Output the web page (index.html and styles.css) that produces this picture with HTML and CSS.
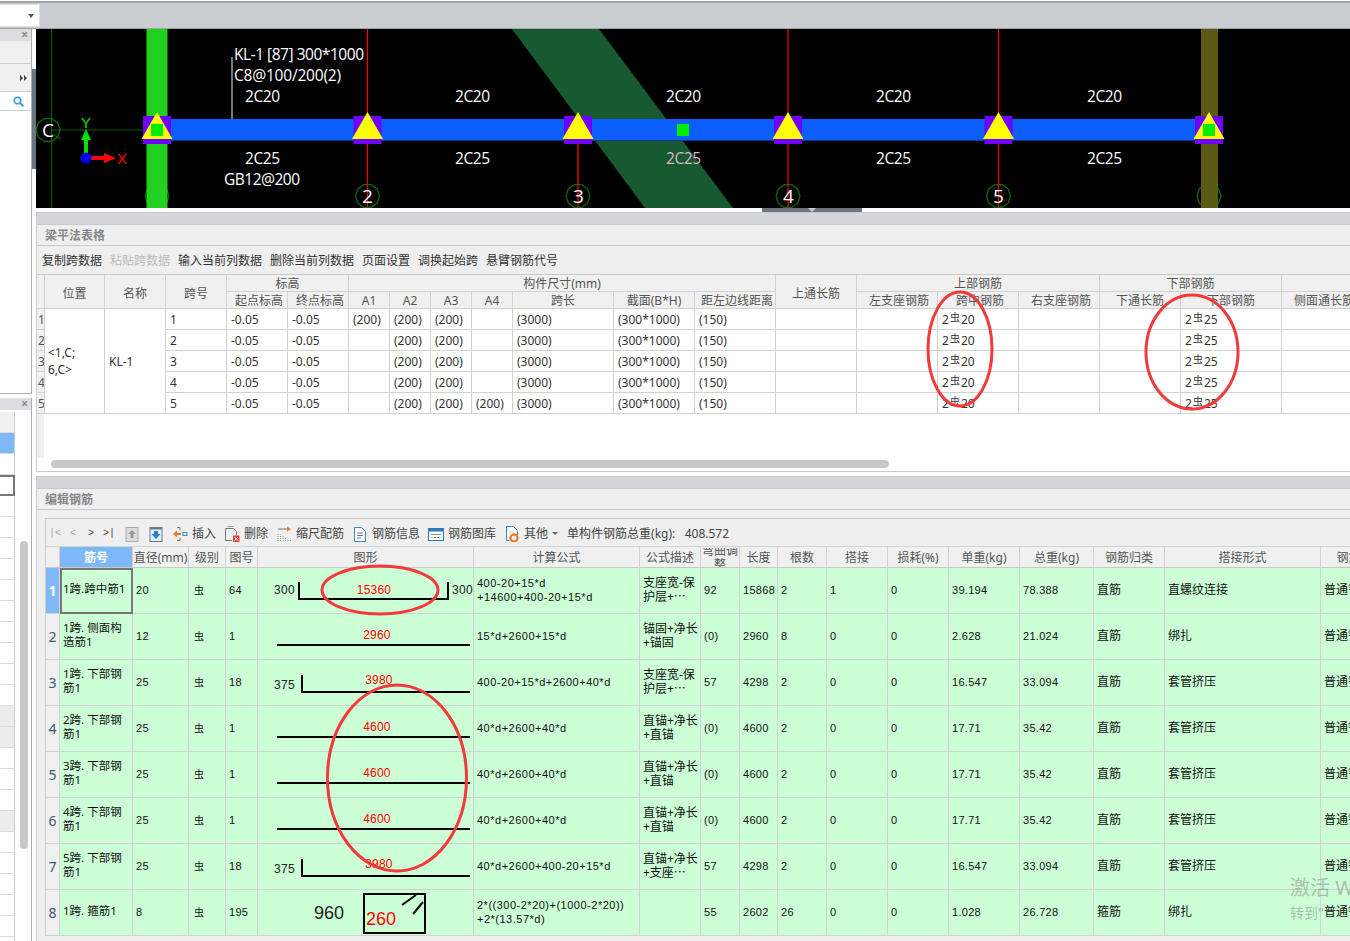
FILE: index.html
```html
<!DOCTYPE html>
<html lang="zh">
<head>
<meta charset="utf-8">
<title>梁平法表格</title>
<link rel="stylesheet" href="styles.css">
</head>
<body>
<header class="topbar">
  <div class="combo"><span class="combo-caret"></span></div>
</header>
<div class="main">
  <aside class="sidebar">
    <section class="pane pane-top">
      <div class="pane-head">×</div>
      <div class="side-row side-a"></div>
      <div class="side-row side-b">
        <svg class="side-more" width="8" height="6" viewBox="0 0 8 6"><path d="M0 0l3 3-3 3zM4 0l3 3-3 3z" fill="#444"/></svg>
      </div>
      <div class="side-row side-c">
        <svg width="11" height="11" viewBox="0 0 11 11"><circle cx="4.5" cy="4.5" r="3.3" fill="none" stroke="#3c9bd8" stroke-width="1.6"/><path d="M7 7l3.3 3.3" stroke="#3c9bd8" stroke-width="2"/></svg>
      </div>
    </section>
    <section class="pane pane-bottom">
      <div class="pane-head">×</div>
      <div class="list">
        <div class="li li-head"></div><div class="li li-blue"></div><div class="li"></div><div class="li li-sel"></div>
        <div class="li"></div><div class="li"></div><div class="li"></div><div class="li"></div>
        <div class="li"></div><div class="li"></div><div class="li"></div><div class="li"></div>
        <div class="li"></div><div class="li"></div><div class="li li-grey"></div><div class="li li-grey"></div>
        <div class="li"></div><div class="li"></div><div class="li"></div><div class="li li-grey"></div>
        <div class="li"></div><div class="li"></div><div class="li"></div><div class="li"></div>
        <div class="li"></div><div class="li"></div>
      </div>
      <div class="side-scroll"></div>
    </section>
  </aside>
  <div class="gutter"><span class="gutter-handle"></span></div>
  <div class="content">
    <div class="canvas">
      <svg class="drawing" width="1314" height="179" viewBox="36 29 1314 179">
        <defs>
          <polygon id="ring" points="12,0 9.7,7.05 3.7,11.4 -3.7,11.4 -9.7,7.05 -12,0 -9.7,-7.05 -3.7,-11.4 3.7,-11.4 9.7,-7.05" fill="none" stroke="#0a6e0a" stroke-width="1.2"/>
          <g id="support">
            <rect x="-14" y="-14" width="28" height="28" fill="#7000ff"/>
            <polygon points="0,-18 -15.5,9 15.5,9" fill="#ffff00"/>
          </g>
        </defs>
        <rect x="36" y="29" width="1314" height="179" fill="#000"/>
        <path d="M51.5 29V208M52 130H143M52 134L61 139" stroke="#0b5c0b" stroke-width="1.2" fill="none"/>
        <use href="#ring" x="48" y="130"/>
        <use href="#ring" x="157" y="196"/>
        <use href="#ring" x="1209" y="196"/>
        <polygon points="512,29 599,29 733,208 645,208" fill="#175a30"/>
        <rect x="146.500" y="29" width="21" height="179" fill="#22d020"/>
        <rect x="1201" y="29" width="17" height="179" fill="#5a5a14"/>
        <path d="M367.500 29V208M788 29V208M998.500 29V208" stroke="#f00" stroke-width="1.2"/>
        <path d="M578 144V208" stroke="#d80000" stroke-width="1.6"/>
        <use href="#ring" x="367.500" y="196"/>
        <use href="#ring" x="578" y="196"/>
        <use href="#ring" x="788" y="196"/>
        <use href="#ring" x="998.500" y="196"/>
        <rect x="167" y="119" width="1034" height="21" fill="#0d5eff"/>
        <rect x="167" y="140" width="1034" height="1" fill="#0a3a90"/>
        <path d="M232 57V119" stroke="#c8c8c8" stroke-width="1.2"/>
        <use href="#support" x="157" y="130"/>
        <use href="#support" x="367.500" y="130"/>
        <use href="#support" x="578" y="130"/>
        <use href="#support" x="788" y="130"/>
        <use href="#support" x="998.500" y="130"/>
        <use href="#support" x="1209" y="130"/>
        <rect x="151" y="124" width="12" height="12" fill="#00ee00"/>
        <rect x="677" y="124" width="12" height="12" fill="#00ee00"/>
        <rect x="1203" y="124" width="12" height="12" fill="#00ee00"/>
        <path d="M86 156V138" stroke="#00e000" stroke-width="4"/>
        <polygon points="86,129 81,140 91,140" fill="#00e000"/>
        <path d="M90 158H106" stroke="#f00" stroke-width="4"/>
        <polygon points="116,158 104,153 104,163" fill="#f00"/>
        <circle cx="86" cy="158" r="5.500" fill="#0000ee"/>
        <text class="axis-y" x="81" y="128" textLength="10">Y</text>
        <text class="axis-x" x="117" y="164" textLength="10">X</text>
        <text class="cad" x="234" y="60" textLength="130">KL-1 [87] 300*1000</text>
        <text class="cad" x="234" y="81" textLength="107">C8@100/200(2)</text>
        <text class="cad" x="245" y="102" textLength="35">2C20</text>
        <text class="cad" x="455" y="102" textLength="35">2C20</text>
        <text class="cad" x="666" y="102" textLength="35">2C20</text>
        <text class="cad" x="876" y="102" textLength="35">2C20</text>
        <text class="cad" x="1087" y="102" textLength="35">2C20</text>
        <text class="cad" x="245" y="164" textLength="35">2C25</text>
        <text class="cad" x="455" y="164" textLength="35">2C25</text>
        <text class="cad cad-tint" x="666" y="164" textLength="35">2C25</text>
        <text class="cad" x="876" y="164" textLength="35">2C25</text>
        <text class="cad" x="1087" y="164" textLength="35">2C25</text>
        <text class="cad" x="224" y="185" textLength="76">GB12@200</text>
        <text class="cad cad-big" x="42" y="137">C</text>
        <text class="cad cad-big" x="362" y="203">2</text>
        <text class="cad cad-big" x="573" y="203">3</text>
        <text class="cad cad-big" x="783" y="203">4</text>
        <text class="cad cad-big" x="993" y="203">5</text>
      </svg>
    </div>
    <div class="splitter"><span class="split-handle"></span></div>

    <section class="block block-table">
      <div class="block-bar"></div>
      <div class="block-title">梁平法表格</div>
      <div class="tools">
        <span>复制跨数据</span><span class="off">粘贴跨数据</span><span>输入当前列数据</span><span>删除当前列数据</span><span>页面设置</span><span>调换起始跨</span><span>悬臂钢筋代号</span>
      </div>
      <div class="sheet-wrap">
        <table class="sheet">
          <colgroup>
            <col class="w8"><col class="w60"><col class="w61"><col class="w61"><col class="w61"><col class="w61">
            <col class="w41"><col class="w41"><col class="w41"><col class="w41"><col class="w101"><col class="w81"><col class="w81">
            <col class="w81"><col class="w81"><col class="w81"><col class="w81"><col class="w81"><col class="w101"><col class="w85">
          </colgroup>
          <thead>
            <tr>
              <th rowspan="2"></th><th rowspan="2" class="rs">位置</th><th rowspan="2" class="rs">名称</th><th rowspan="2" class="rs">跨号</th>
              <th colspan="2">标高</th><th colspan="7">构件尺寸(mm)</th><th rowspan="2" class="rs">上通长筋</th>
              <th colspan="3">上部钢筋</th><th colspan="2">下部钢筋</th><th></th>
            </tr>
            <tr>
              <th class="o">起点标高</th><th class="o">终点标高</th><th>A1</th><th>A2</th><th>A3</th><th>A4</th><th>跨长</th><th>截面(B*H)</th><th class="o">距左边线距离</th>
              <th class="o">左支座钢筋</th><th class="o">跨中钢筋</th><th class="o">右支座钢筋</th><th>下通长筋</th><th>下部钢筋</th><th>侧面通长筋</th>
            </tr>
          </thead>
          <tbody>
            <tr>
              <td class="rn">1</td><td rowspan="5" class="pos">&lt;1,C;<br>6,C&gt;</td><td rowspan="5">KL-1</td>
              <td>1</td><td>-0.05</td><td>-0.05</td><td>(200)</td><td>(200)</td><td>(200)</td><td></td><td>(3000)</td><td>(300*1000)</td><td>(150)</td><td></td><td></td><td>2<span class="bar">虫</span>20</td><td></td><td></td><td>2<span class="bar">虫</span>25</td><td></td>
            </tr>
            <tr>
              <td class="rn">2</td>
              <td>2</td><td>-0.05</td><td>-0.05</td><td></td><td>(200)</td><td>(200)</td><td></td><td>(3000)</td><td>(300*1000)</td><td>(150)</td><td></td><td></td><td>2<span class="bar">虫</span>20</td><td></td><td></td><td>2<span class="bar">虫</span>25</td><td></td>
            </tr>
            <tr>
              <td class="rn">3</td>
              <td>3</td><td>-0.05</td><td>-0.05</td><td></td><td>(200)</td><td>(200)</td><td></td><td>(3000)</td><td>(300*1000)</td><td>(150)</td><td></td><td></td><td>2<span class="bar">虫</span>20</td><td></td><td></td><td>2<span class="bar">虫</span>25</td><td></td>
            </tr>
            <tr>
              <td class="rn">4</td>
              <td>4</td><td>-0.05</td><td>-0.05</td><td></td><td>(200)</td><td>(200)</td><td></td><td>(3000)</td><td>(300*1000)</td><td>(150)</td><td></td><td></td><td>2<span class="bar">虫</span>20</td><td></td><td></td><td>2<span class="bar">虫</span>25</td><td></td>
            </tr>
            <tr>
              <td class="rn">5</td>
              <td>5</td><td>-0.05</td><td>-0.05</td><td></td><td>(200)</td><td>(200)</td><td>(200)</td><td>(3000)</td><td>(300*1000)</td><td>(150)</td><td></td><td></td><td>2<span class="bar">虫</span>20</td><td></td><td></td><td>2<span class="bar">虫</span>25</td><td></td>
            </tr>
          </tbody>
        </table>
        <div class="sheet-strip"></div>
        <div class="sheet-scroll"></div>
      </div>
    </section>

    <section class="block block-rebar">
      <div class="block-bar"></div>
      <div class="block-title">编辑钢筋</div>
      <div class="rebar-body">
        <div class="panel">
          <div class="rtools">
            <div class="nav"><span class="dim">|&lt;</span><span class="dim">&lt;</span><span>&gt;</span><span>&gt;|</span></div>
            <svg class="ic" viewBox="0 0 16 16"><rect x="2" y="1.500" width="12" height="14" fill="#ddd" stroke="#aaa"/><path d="M8 4l4 4H9.500v4h-3V8H4z" fill="#999"/></svg>
            <svg class="ic" viewBox="0 0 16 16"><rect x="2" y="1.500" width="12" height="14" fill="#e4eefa" stroke="#6b7a8a"/><rect x="2" y="1.500" width="12" height="2" fill="#6b7a8a"/><path d="M8 13l4.500-5H10V5H6v3H3.500z" fill="#2a7fd4"/></svg>
            <span class="ti"><svg class="ic" viewBox="0 0 16 16"><path d="M1 8l4-3.500V7h4v2H5v2.500z" fill="#ee7a1a"/><path d="M5 1.500h3M5 14.500h3M8 1.500v3M8 11.500v3" stroke="#777" fill="none"/><rect x="11" y="6.500" width="4" height="3" fill="none" stroke="#3a87c8"/></svg>插入</span>
            <span class="ti"><svg class="ic" viewBox="0 0 16 16"><path d="M1.500 2.500h8l3 3V9M1.500 2.500V14.500H8" fill="none" stroke="#777"/><path d="M3.500 .5h6" stroke="#999"/><rect x="9" y="9.500" width="6.500" height="6.500" fill="#e0423c"/><path d="M10.500 11l3.500 3.500M14 11l-3.500 3.500" stroke="#fff"/></svg>删除</span>
            <span class="ti"><svg class="ic" viewBox="0 0 16 16"><path d="M2 15V7M4.500 15V8.500M7 15V10M9.500 15v-3.500M12 15v-2M14.500 15v-1" stroke="#8a8f96" stroke-dasharray="1 1" fill="none"/><path d="M2 3h10" stroke="#777"/><path d="M15 3l-4-2.500v5z" fill="#ee7a1a"/></svg>缩尺配筋</span>
            <span class="ti"><svg class="ic" viewBox="0 0 16 16"><path d="M2.500 1.500h7l4 4v10h-11z" fill="#fff" stroke="#3a87c8"/><path d="M5 7h6M5 9.500h6M5 12h4" stroke="#777"/></svg>钢筋信息</span>
            <span class="ti"><svg class="ic" viewBox="0 0 16 16"><rect x=".5" y="2.500" width="15" height="12" fill="#fff" stroke="#2e78bd"/><rect x=".5" y="2.500" width="15" height="3" fill="#2e78bd"/><path d="M3 8.500h10" stroke="#888"/><path d="M3 11.500h2" stroke="#d9a030"/><path d="M6 11.500h2" stroke="#d84a3a"/><path d="M9 11.500h2" stroke="#3aa060"/></svg>钢筋图库</span>
            <span class="ti"><svg class="ic" viewBox="0 0 16 16"><path d="M2.500 .5h7l4 4V9M2.500 .5V14.500h3" fill="#fff" stroke="#3a87c8"/><circle cx="10" cy="12" r="3.500" fill="none" stroke="#ee7a1a" stroke-width="2"/><path d="M10 7.500v2M10 14.500v2M5.500 12h2M12.500 12h2" stroke="#ee7a1a" stroke-width="1.500"/></svg>其他</span>
            <span class="caret"></span>
            <span class="total">单构件钢筋总重(kg):&nbsp;&nbsp; 408.572</span>
          </div>
          <table class="grid">
            <colgroup>
              <col class="w14"><col class="w73"><col class="w56"><col class="w37"><col class="w32"><col class="w216"><col class="w166"><col class="w61"><col class="w39"><col class="w38"><col class="w49"><col class="w61"><col class="w61"><col class="w71"><col class="w74"><col class="w71"><col class="w156"><col class="w80">
            </colgroup>
            <thead>
              <tr>
                <th></th><th class="cur">筋号</th><th>直径(mm)</th><th>级别</th><th>图号</th><th>图形</th><th>计算公式</th><th>公式描述</th><th><div class="clip">弯曲调整</div></th><th>长度</th><th>根数</th><th>搭接</th><th>损耗(%)</th><th>单重(kg)</th><th>总重(kg)</th><th>钢筋归类</th><th>搭接形式</th><th>钢筋类型</th>
              </tr>
            </thead>
            <tbody>
              <tr>
                <th class="cur">1</th><td class="active name">1跨.跨中筋1</td><td class="n">20</td><td class="lv">虫</td><td class="n">64</td>
                <td class="shape"><svg class="sh" viewBox="257 0 215 45"><text class="dim-t" x="273" y="26">300</text><path d="M298 14V31H447V14" class="rb"/><text class="red-t" x="373" y="26">15360</text><text class="dim-t" x="451" y="26">300</text></svg></td>
                <td class="n f">400-20+15*d<br>+14600+400-20+15*d</td><td class="d">支座宽-保<br>护层+⋯</td><td class="n">92</td><td class="n">15868</td><td class="n">2</td><td class="n">1</td><td class="n">0</td><td class="n">39.194</td><td class="n">78.388</td><td>直筋</td><td>直螺纹连接</td><td>普通钢筋</td>
              </tr>
              <tr>
                <th>2</th><td class="name">1跨. 侧面构<br>造筋1</td><td class="n">12</td><td class="lv">虫</td><td class="n">1</td>
                <td class="shape"><svg class="sh" viewBox="257 0 215 45"><text class="red-t" x="376" y="25">2960</text><path d="M276 31H469" class="rb"/></svg></td>
                <td class="n f">15*d+2600+15*d</td><td class="d">锚固+净长<br>+锚固</td><td class="n">(0)</td><td class="n">2960</td><td class="n">8</td><td class="n">0</td><td class="n">0</td><td class="n">2.628</td><td class="n">21.024</td><td>直筋</td><td>绑扎</td><td>普通钢筋</td>
              </tr>
              <tr>
                <th>3</th><td class="name">1跨. 下部钢<br>筋1</td><td class="n">25</td><td class="lv">虫</td><td class="n">18</td>
                <td class="shape"><svg class="sh" viewBox="257 0 215 45"><text class="dim-t" x="273" y="29">375</text><path d="M301 15V32H469" class="rb"/><text class="red-t" x="378" y="24">3980</text></svg></td>
                <td class="n f">400-20+15*d+2600+40*d</td><td class="d">支座宽-保<br>护层+⋯</td><td class="n">57</td><td class="n">4298</td><td class="n">2</td><td class="n">0</td><td class="n">0</td><td class="n">16.547</td><td class="n">33.094</td><td>直筋</td><td>套管挤压</td><td>普通钢筋</td>
              </tr>
              <tr>
                <th>4</th><td class="name">2跨. 下部钢<br>筋1</td><td class="n">25</td><td class="lv">虫</td><td class="n">1</td>
                <td class="shape"><svg class="sh" viewBox="257 0 215 45"><text class="red-t" x="376" y="25">4600</text><path d="M276 31H469" class="rb"/></svg></td>
                <td class="n f">40*d+2600+40*d</td><td class="d">直锚+净长<br>+直锚</td><td class="n">(0)</td><td class="n">4600</td><td class="n">2</td><td class="n">0</td><td class="n">0</td><td class="n">17.71</td><td class="n">35.42</td><td>直筋</td><td>套管挤压</td><td>普通钢筋</td>
              </tr>
              <tr>
                <th>5</th><td class="name">3跨. 下部钢<br>筋1</td><td class="n">25</td><td class="lv">虫</td><td class="n">1</td>
                <td class="shape"><svg class="sh" viewBox="257 0 215 45"><text class="red-t" x="376" y="25">4600</text><path d="M276 31H469" class="rb"/></svg></td>
                <td class="n f">40*d+2600+40*d</td><td class="d">直锚+净长<br>+直锚</td><td class="n">(0)</td><td class="n">4600</td><td class="n">2</td><td class="n">0</td><td class="n">0</td><td class="n">17.71</td><td class="n">35.42</td><td>直筋</td><td>套管挤压</td><td>普通钢筋</td>
              </tr>
              <tr>
                <th>6</th><td class="name">4跨. 下部钢<br>筋1</td><td class="n">25</td><td class="lv">虫</td><td class="n">1</td>
                <td class="shape"><svg class="sh" viewBox="257 0 215 45"><text class="red-t" x="376" y="25">4600</text><path d="M276 31H469" class="rb"/></svg></td>
                <td class="n f">40*d+2600+40*d</td><td class="d">直锚+净长<br>+直锚</td><td class="n">(0)</td><td class="n">4600</td><td class="n">2</td><td class="n">0</td><td class="n">0</td><td class="n">17.71</td><td class="n">35.42</td><td>直筋</td><td>套管挤压</td><td>普通钢筋</td>
              </tr>
              <tr>
                <th>7</th><td class="name">5跨. 下部钢<br>筋1</td><td class="n">25</td><td class="lv">虫</td><td class="n">18</td>
                <td class="shape"><svg class="sh" viewBox="257 0 215 45"><text class="dim-t" x="273" y="29">375</text><path d="M301 15V32H469" class="rb"/><text class="red-t" x="378" y="24">3980</text></svg></td>
                <td class="n f">40*d+2600+400-20+15*d</td><td class="d">直锚+净长<br>+支座⋯</td><td class="n">57</td><td class="n">4298</td><td class="n">2</td><td class="n">0</td><td class="n">0</td><td class="n">16.547</td><td class="n">33.094</td><td>直筋</td><td>套管挤压</td><td>普通钢筋</td>
              </tr>
              <tr>
                <th>8</th><td class="name">1跨. 箍筋1</td><td class="n">8</td><td class="lv">虫</td><td class="n">195</td>
                <td class="shape"><svg class="sh" viewBox="257 0 215 45"><text class="big-t" x="313" y="29">960</text><rect x="363" y="4" width="61" height="39" class="rb"/><path d="M401 15L415 5M412 24L422 12" class="rb"/><text class="big-r" x="365" y="35">260</text></svg></td>
                <td class="n f">2*((300-2*20)+(1000-2*20))<br>+2*(13.57*d)</td><td class="d"></td><td class="n">55</td><td class="n">2602</td><td class="n">26</td><td class="n">0</td><td class="n">0</td><td class="n">1.028</td><td class="n">26.728</td><td>箍筋</td><td>绑扎</td><td>普通钢筋</td>
              </tr>
            </tbody>
          </table>
        </div>
      </div>
    </section>
  </div>
</div>
<svg class="marks" width="1350" height="941" viewBox="0 0 1350 941">
  <ellipse cx="960" cy="349" rx="32" ry="57"/>
  <ellipse cx="1192" cy="352" rx="46" ry="57"/>
  <ellipse cx="380" cy="590" rx="58" ry="24"/>
  <ellipse cx="397" cy="778" rx="69.500" ry="93"/>
</svg>
<div class="watermark"><div class="wm1">激活 W</div><div class="wm2">转到"</div></div>
</body>
</html>
```
FILE: styles.css
```css
* { box-sizing: border-box; }
html, body { margin: 0; padding: 0; }
body {
  position: relative;
  width: 1350px;
  height: 941px;
  overflow: hidden;
  background: #fff;
  display: flex;
  flex-direction: column;
  font: 12px/14px "Noto Sans", "Noto Sans CJK SC", sans-serif;
  color: #333;
}

/* top bar */
.topbar {
  flex: none;
  height: 28px;
  margin-top: 1px;
  border-top: 2px solid #a0a3a8;
  border-bottom: 1px solid #a0a3a8;
  background: #c9ccd0;
  padding-top: 1px;
}
.combo {
  width: 40px;
  height: 23px;
  background: #fff;
  border: 1px solid #ddd;
  border-left: 0;
  display: flex;
  align-items: center;
  justify-content: flex-end;
  padding-right: 5px;
}
.combo-caret {
  border: 3px solid transparent;
  border-top: 4px solid #555;
  border-bottom: 0;
}

.main { flex: 1; display: flex; min-height: 0; }

/* sidebar */
.sidebar {
  flex: none;
  width: 32px;
  display: flex;
  flex-direction: column;
}
.pane { border-right: 1px solid #a9abae; background: #fff; position: relative; }
.pane-top { height: 365px; border-bottom: 1px solid #a9abae; margin-bottom: 4px; }
.pane-bottom { flex: 1; min-height: 0; overflow: hidden; }
.pane-head {
  height: 12px;
  background: #dcdde0;
  color: #888;
  font-size: 12px;
  line-height: 11px;
  text-align: right;
  padding-right: 3px;
  font-weight: 700;
}
.side-row {
  border-bottom: 1px solid #cfcfcf;
  display: flex;
  align-items: center;
  justify-content: flex-end;
}
.side-a { height: 23px; background: #f0f0f0; }
.side-b { height: 28px; background: #f0f0f0; padding-right: 3px; }
.side-c { height: 19px; background: #fff; padding-right: 7px; }
.list { margin-top: 2px; width: 15px; }
.li { height: 21px; border-bottom: 1px solid #dcdcdc; border-right: 1px solid #ccc; background: #fff; }
.li-head { background: #f0f0f0; }
.li-blue { background: #7eb8f8; }
.li-sel { border: 2px solid #777; border-left: 0; }
.li-grey { background: #ececec; }
.side-scroll {
  position: absolute;
  left: 20px;
  top: 143px;
  width: 8px;
  height: 308px;
  background: #c8c8c8;
  border-radius: 4px;
}

.gutter { flex: none; width: 4px; background: #fff; position: relative; }
.gutter-handle {
  position: absolute;
  top: 40px;
  left: 0;
  width: 4px;
  height: 100px;
  background: #6b7580;
}

/* content */
.content { flex: 1; min-width: 0; display: flex; flex-direction: column; }
.canvas { flex: none; height: 179px; background: #000; }
.drawing { display: block; }
.cad { fill: #fff; font: 15.500px "Open Sans", "Liberation Sans", sans-serif; }
.cad-tint { fill: #dcb4d0; }
.cad-big { font-size: 19px; }
.axis-y { fill: #00e000; font: 15px "Liberation Sans", sans-serif; }
.axis-x { fill: #f00; font: 15px "Liberation Sans", sans-serif; }
.splitter { flex: none; height: 4px; position: relative; background: #fff; }
.split-handle {
  position: absolute;
  left: 726px;
  top: 0;
  width: 100px;
  height: 4px;
  background: #6b7580;
}
.split-handle::after {
  content: "";
  position: absolute;
  left: 46px;
  top: 0;
  border: 4px solid transparent;
  border-top: 4px solid #c8ccd0;
  border-bottom: 0;
}

.block { border-left: 1px solid #ccc; flex: none; }
.block-bar { height: 12px; background: #d4d6da; border-top: 1px solid #c6c8cc; }
.block-title {
  height: 22px;
  background: #efefef;
  border-top: 1px solid #c8c8d0;
  border-bottom: 1px solid #c8c8d0;
  padding: 1px 0 0 8px;
  color: #888;
  font-weight: 700;
  line-height: 20px;
}
.tools {
  height: 28px;
  background: #efefef;
  display: flex;
  align-items: center;
  gap: 8px;
  padding: 2px 0 0 5px;
  color: #333;
}
.off { color: #bbb; }

.sheet-wrap {
  height: 198px;
  position: relative;
  overflow: hidden;
  background: #fff;
  border-top: 1px solid #c9c9c9;
  border-bottom: 1px solid #c9c9c9;
}
.sheet, .grid {
  table-layout: fixed;
  border-collapse: separate;
  border-spacing: 0;
}
.sheet { width: 1330px; }
.grid { width: 1355px; }
.w8 { width: 8px; } .w14 { width: 14px; } .w32 { width: 32px; } .w37 { width: 37px; } .w38 { width: 38px; }
.w39 { width: 39px; } .w41 { width: 41px; } .w49 { width: 49px; } .w56 { width: 56px; } .w60 { width: 60px; }
.w61 { width: 61px; } .w71 { width: 71px; } .w73 { width: 73px; } .w74 { width: 74px; } .w80 { width: 80px; }
.w81 { width: 81px; } .w85 { width: 85px; } .w101 { width: 101px; } .w156 { width: 156px; } .w166 { width: 166px; } .w216 { width: 216px; }

.sheet th, .sheet td {
  border-right: 1px solid #d2d2d2;
  border-bottom: 1px solid #d2d2d2;
  overflow: hidden;
  white-space: nowrap;
}
.sheet th {
  height: 17px;
  background: #f0f0f0;
  font-weight: 400;
  color: #555;
  line-height: 14px;
  padding: 1px 0 0;
}
.sheet .o { padding-left: 4px; }
.sheet .rs { padding-top: 4px; }
.sheet td { height: 21px; padding: 1px 4px 0; }
.sheet .rn { background: #f0f0f0; padding: 1px 0 0 1px; color: #555; }
.sheet .pos { padding: 0 0 0 3px; line-height: 17px; }
.bar { font-size: 10px; position: relative; top: -3px; margin: 0 1px; }
.sheet-strip {
  position: absolute;
  left: 0;
  top: 139px;
  width: 7px;
  height: 44px;
  background: #f0f0f0;
}
.sheet-scroll {
  position: absolute;
  left: 14px;
  top: 185px;
  width: 838px;
  height: 8px;
  background: #c8c8c8;
  border-radius: 4px;
}

.block-rebar { flex: 1; display: flex; flex-direction: column; margin-top: 4px; min-height: 0; }
.rebar-body { flex: 1; background: #efefef; padding: 8px 0 0 8px; overflow: hidden; }
.panel { border-top: 1px solid #ccc; border-left: 1px solid #ccc; }
.rtools {
  height: 27px;
  display: flex;
  align-items: center;
  gap: 8px;
  color: #444;
  background: #efefef;
  padding-top: 2px;
}
.nav { display: flex; margin-right: -2px; font-family: "Liberation Mono", monospace; font-size: 10px; }
.nav span { width: 18px; text-align: center; }
.nav .dim { color: #aaa; }
.ic { width: 16px; height: 16px; flex: none; display: block; }
.ti { display: flex; align-items: center; gap: 4px; }
.caret {
  margin-left: -4px;
  border: 3px solid transparent;
  border-top: 3px solid #666;
  border-bottom: 0;
}
.total { margin-left: 1px; }

.grid th, .grid td {
  border-right: 1px solid #d2d2d2;
  border-bottom: 1px solid #d2d2d2;
  overflow: hidden;
  white-space: nowrap;
}
.grid thead th {
  height: 22px;
  background: #f0f0f0;
  border-top: 1px solid #d2d2d2;
  border-bottom-color: #c8c8c8;
  font-weight: 400;
  color: #555;
  padding: 1px 0 0;
}
.grid thead .cur { background: #7eb8f8; color: #fff; font-weight: 700; }
.clip {
  height: 19px;
  display: flex;
  align-items: center;
  justify-content: center;
  overflow: hidden;
  white-space: normal;
  line-height: 14px;
}
.grid tbody th {
  height: 46px;
  background: #f0f0f0;
  font-weight: 400;
  font-size: 14px;
  color: #3a5a7a;
  padding: 1px 0 0;
}
.grid tbody th.cur { background: #7eb8f8; color: #fff; font-weight: 700; }
.grid tbody td {
  height: 46px;
  background: #ccffd6;
  padding: 0 3px 2px;
  color: #111;
}
.grid .name { line-height: 14px; font-size: 11.500px; padding: 0 0 4px 3px; }
.grid .active { outline: 2px solid #777; outline-offset: -2px; }
.grid .n { font: 11px/14px "Liberation Sans", sans-serif; letter-spacing: .3px; padding-left: 3px; }
.grid .f { padding-left: 3px; letter-spacing: .5px; }
.grid .lv { font-size: 10px; padding-left: 5px; }
.grid .d { padding-left: 3px; white-space: nowrap; }
.grid .shape { padding: 0; }
.sh { display: block; width: 215px; height: 45px; }
.rb { fill: none; stroke: #000; stroke-width: 2; }
.dim-t { font: 12px "Liberation Sans", sans-serif; letter-spacing: .3px; fill: #222; }
.red-t { font: 12px "Liberation Sans", sans-serif; letter-spacing: .2px; fill: #f00; text-anchor: middle; }
.big-t { font: 18px "Liberation Sans", sans-serif; fill: #222; }
.big-r { font: 18px "Liberation Sans", sans-serif; fill: #f00; }

/* annotations drawn over the screen capture */
.marks { position: absolute; left: 0; top: 0; pointer-events: none; }
.marks ellipse { fill: none; stroke: #f23a3a; stroke-width: 3; }

.watermark { position: absolute; left: 1290px; top: 875px; color: rgba(130, 130, 130, .5); white-space: nowrap; pointer-events: none; }
.wm1 { font-size: 20px; line-height: 26px; }
.wm2 { font-size: 14px; line-height: 20px; margin-top: 2px; }
```
